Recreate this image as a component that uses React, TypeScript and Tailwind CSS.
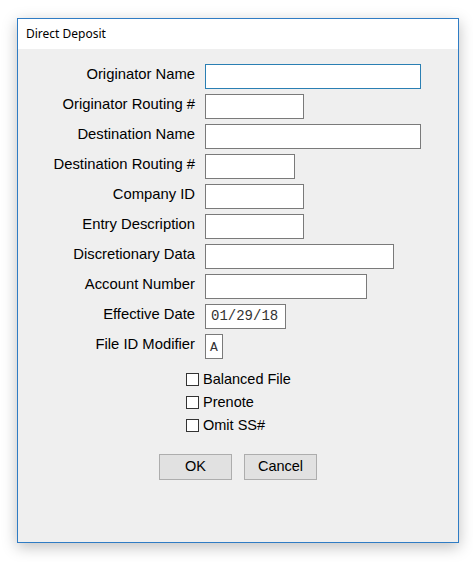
const fields = [
  { label: 'Originator Name', width: 'w-[216px]', focused: true },
  { label: 'Originator Routing #', width: 'w-[99px]' },
  { label: 'Destination Name', width: 'w-[216px]' },
  { label: 'Destination Routing #', width: 'w-[90px]' },
  { label: 'Company ID', width: 'w-[99px]' },
  { label: 'Entry Description', width: 'w-[99px]' },
  { label: 'Discretionary Data', width: 'w-[189px]' },
  { label: 'Account Number', width: 'w-[162px]' },
];

const checks = ['Balanced File', 'Prenote', 'Omit SS#'];

export default function App() {
  return (
    <div className="w-[473px] h-[562px] bg-white relative font-['Liberation_Sans',Arial,sans-serif] text-black">
      {/* Dialog window */}
      <div className="absolute left-[17px] top-[18px] w-[442px] h-[525px] border border-[#2f7cc4] bg-[#efefef] shadow-[0_4px_14px_rgba(0,0,0,0.25)] flex flex-col">
        <div className="h-[30px] bg-white flex items-center pl-[8px] text-[12px] font-['Noto_Sans',sans-serif]">
          Direct Deposit
        </div>

        <div className="pt-[15px] flex flex-col gap-[5px]">
          {fields.map((f) => (
            <div key={f.label} className="flex items-center h-[25px]">
              <div className="w-[177px] text-right text-[14.8px] pb-[4px]">{f.label}</div>
              <div
                className={`ml-[10px] h-[25px] bg-white border ${
                  f.focused ? 'border-[#2a7fb3]' : 'border-[#7a7a7a]'
                } ${f.width}`}
              />
            </div>
          ))}

          <div className="flex items-center h-[25px]">
            <div className="w-[177px] text-right text-[14.8px] pb-[4px]">Effective Date</div>
            <div className="ml-[10px] h-[25px] w-[81px] bg-white border border-[#7a7a7a] flex items-center pl-[5px] font-['Liberation_Mono',monospace] text-[14px] text-[#333]">
              01/29/18
            </div>
          </div>

          <div className="flex items-center h-[25px]">
            <div className="w-[177px] text-right text-[14.8px] pb-[4px]">File ID Modifier</div>
            <div className="ml-[10px] h-[25px] w-[18px] bg-white border border-[#7a7a7a] flex items-center justify-center pt-[2px] font-['Liberation_Mono',monospace] text-[13px] text-[#333]">
              A
            </div>
          </div>
        </div>

        <div className="pl-[168px] pt-[12px] flex flex-col gap-[7px]">
          {checks.map((c) => (
            <div key={c} className="flex items-center h-[16px] gap-[4px]">
              <div className="w-[13px] h-[13px] border border-[#333] bg-white" />
              <span className="text-[14.5px] leading-none">{c}</span>
            </div>
          ))}
        </div>

        <div className="pt-[21px] pl-[141px] flex gap-[12px]">
          <button className="w-[73px] h-[26px] bg-[#e1e1e1] border border-[#adadad] text-[14.5px]">OK</button>
          <button className="w-[73px] h-[26px] bg-[#e1e1e1] border border-[#adadad] text-[14.5px]">Cancel</button>
        </div>
      </div>
    </div>
  );
}
